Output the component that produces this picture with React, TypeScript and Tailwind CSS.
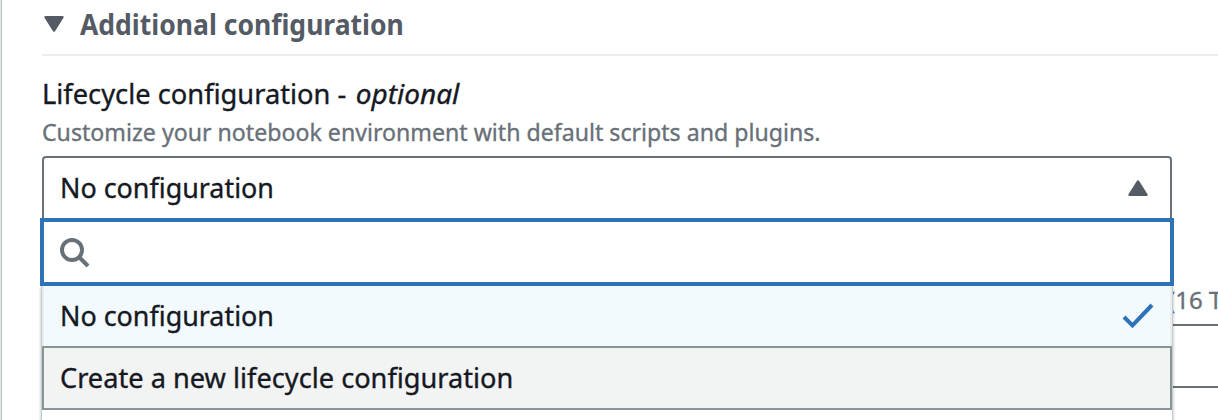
import React from "react";

function Caret({ up = false }: { up?: boolean }) {
  return (
    <svg width="20" height="16" viewBox="0 0 20 16" className={up ? "rotate-180" : ""}>
      <path d="M1.5 1.2H18.5L10 14.5Z" fill="#545b64" stroke="#545b64" strokeWidth="2.4" strokeLinejoin="round" />
    </svg>
  );
}

function Dropdown() {
  return (
    <div className="absolute -left-[2px] top-[62px] h-[220px] w-[1134px]">
      <div className="relative z-10 flex h-[68px] items-center border-4 border-[#2e73b8] bg-white pl-4 pt-[2px]">
        <svg width="30" height="30" viewBox="0 0 30 30" fill="none" stroke="#687078" strokeWidth="4">
          <circle cx="12" cy="12" r="10" />
          <path d="M19 19L28 28" />
        </svg>
      </div>
      <div className="mx-px h-[152px] border-x border-[#c4cbcb] bg-white shadow-[0_2px_3px_rgba(0,28,36,0.3)]">
        <div className="flex h-[60px] items-center justify-between border-x-2 border-x-[#eaeded] bg-[#f2fafd] pb-px pl-4 pr-4">
          <span className="origin-left scale-x-[0.96] pb-px text-[28px]">No configuration</span>
          <svg width="32" height="28" viewBox="0 0 32 28" fill="none" stroke="#2e73b8" strokeWidth="4">
            <path d="M2 15L10.5 23.5L30 3" />
          </svg>
        </div>
        <div className="flex h-16 items-center border-2 border-[#879596] bg-[#f2f3f3] pb-[2px] pl-4">
          <span className="origin-left scale-x-[0.971] text-[28px]">Create a new lifecycle configuration</span>
        </div>
      </div>
    </div>
  );
}

export default function App() {
  return (
    <main className="flex h-[420px] w-[1218px] overflow-hidden whitespace-nowrap bg-white font-['Noto_Sans','Open_Sans',sans-serif] leading-none text-[#16191f] [-webkit-text-stroke:0.35px]">
      <div className="w-[2px] shrink-0 border-r border-[#bac3c3] bg-[#e1e5e5]" />
      <div className="w-[1216px] shrink-0 pl-10">
        <header className="flex h-[56px] items-center border-b-2 border-[#eaeded] pb-[6px] pl-[2px] text-[#545b64]">
          <Caret />
          <h2 className="ml-4 origin-left scale-x-[0.947] pb-px text-[28px] font-bold [-webkit-text-stroke:0]">Additional configuration</h2>
        </header>
        <div className="h-[100px] pt-[23px]">
          <div className="flex h-[38px] text-[28px]">
            <label className="-mr-1.5 inline-block origin-left scale-x-[0.974] whitespace-pre">Lifecycle configuration - </label>
            <em>optional</em>
          </div>
          <p className="flex h-[30px] items-center text-[24px] text-[#687078]">
            <span className="inline-block origin-left scale-x-[0.964]">Customize your notebook environment with default scripts and plugins.</span>
          </p>
        </div>
        <div className="relative w-[1130px]">
          <div className="flex h-16 items-center justify-between rounded-t-[4px] border-2 border-[#687078] pl-4 pr-[22px]">
            <span className="origin-left scale-x-[0.96] pb-[2px] text-[28px]">No configuration</span>
            <Caret up />
          </div>
          <Dropdown />
        </div>
        <div className="mt-[66px] flex h-[38px] justify-end text-[24px] text-[#687078]">
          <span className="h-7 w-[50px] shrink-0 leading-7">(16 T</span>
        </div>
        <div className="h-16 border-y-2 border-[#687078]" />
      </div>
    </main>
  );
}
